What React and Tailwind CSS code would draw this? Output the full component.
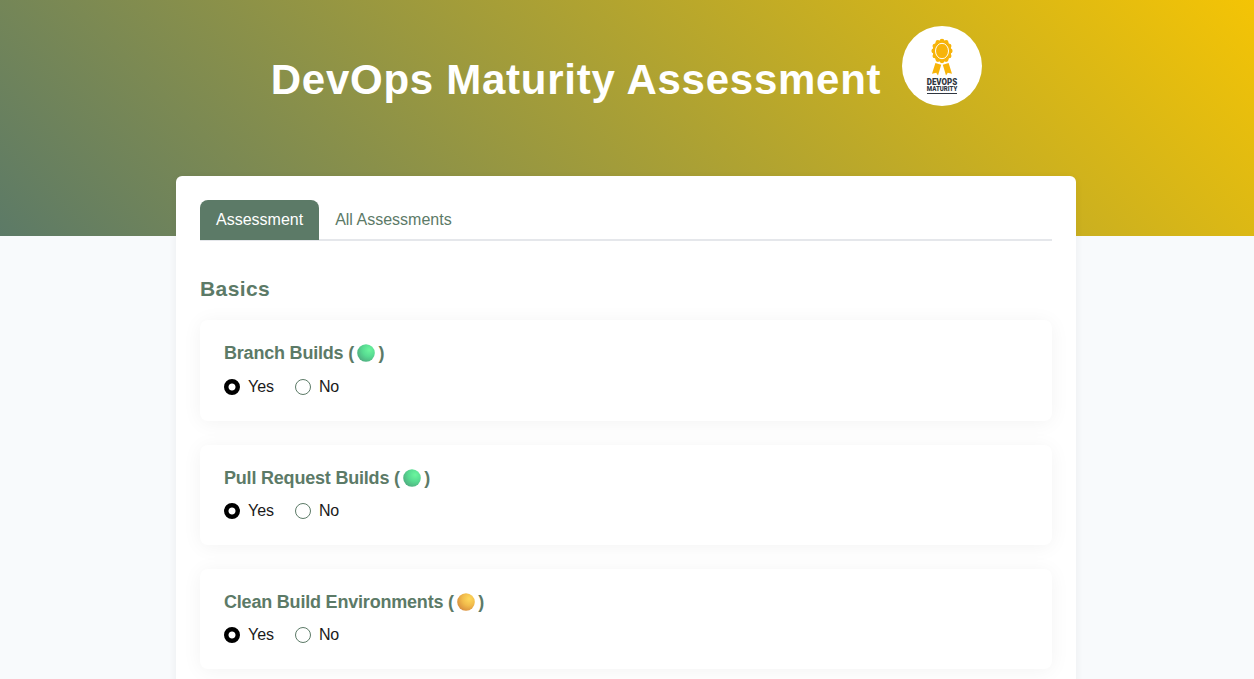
import React from 'react';

const questions = [
  { title: 'Branch Builds', tone: 'green' },
  { title: 'Pull Request Builds', tone: 'green' },
  { title: 'Clean Build Environments', tone: 'yellow' },
];

const tones = {
  green: ['#6cf59e', '#58dc92', '#4fae80'],
  yellow: ['#ffd95c', '#f2bd4c', '#d98f3e'],
};

function Orb({ tone, id }) {
  const [light, mid, dark] = tones[tone];
  return (
    <svg className="mx-[3px] -mt-px size-[18px] shrink-0" viewBox="0 0 18 18">
      <defs>
        <radialGradient id={id} cx="0.68" cy="0.32" r="0.75">
          <stop offset="0" stopColor={light} />
          <stop offset="0.5" stopColor={mid} />
          <stop offset="1" stopColor={dark} />
        </radialGradient>
      </defs>
      <circle cx="9" cy="9" r="8.8" fill={`url(#${id})`} />
    </svg>
  );
}

const petals = Array.from({ length: 12 }, (_, i) => {
  const a = (i * Math.PI) / 6;
  return [40 + 8.2 * Math.sin(a), 25 - 9.8 * Math.cos(a)];
});

function Logo() {
  return (
    <svg className="size-20 shrink-0" viewBox="0 0 80 80">
      <circle cx="40" cy="40" r="40" fill="#fff" />
      <path d="M33.4 37 L39.2 38.8 L36 49.5 L34.2 46.8 L30 47.8 Z M46.6 37 L40.8 38.8 L44 49.5 L45.8 46.8 L50 47.8 Z" fill="#f7b40a" />
      <g fill="#f7b40a">
        <ellipse cx="40" cy="25" rx="9.4" ry="10.8" />
        {petals.map(([x, y], i) => (
          <circle key={i} cx={x} cy={y} r="2.4" />
        ))}
      </g>
      <ellipse cx="40" cy="25" rx="6.5" ry="7.7" fill="none" stroke="#fff" strokeWidth="1" />
      <g fill="#2f3640" fontFamily="Roboto, 'Liberation Sans', sans-serif" fontWeight="900" textAnchor="middle">
        <text x="40" y="58.8" fontSize="9" textLength="30.5" lengthAdjust="spacingAndGlyphs">DEVOPS</text>
        <text x="40" y="65" fontSize="6.6" textLength="30.5" lengthAdjust="spacingAndGlyphs">MATURITY</text>
      </g>
      <rect x="25" y="67" width="30" height="1" fill="#2f3640" />
    </svg>
  );
}

const radioClass =
  'size-4 appearance-none rounded-full border border-[#5c7a67] checked:border-4 checked:border-black checked:bg-[radial-gradient(circle,#fff_3px,#000_4px)]';

function Question({ title, tone, index }) {
  return (
    <section className="h-[100.3px] rounded-lg bg-white px-6 pt-[20.6px] shadow-[0_2px_20px_rgba(0,0,0,0.05)]">
      <h3 className="flex h-[26px] items-center text-[18px] font-bold tracking-[-0.2px] text-[#5c7a67]">
        <span>{title} (</span>
        <Orb tone={tone} id={`orb-${index}`} />
        <span className="ml-[0.5px]">)</span>
      </h3>
      <div className="mt-[7.7px] flex h-6 items-center text-base text-[#1a1a1a]">
        <label className="flex items-center gap-2">
          <input type="radio" name={`q${index}`} defaultChecked className={radioClass} />
          Yes
        </label>
        <label className="ml-[21px] flex items-center gap-2 tracking-[-0.3px]">
          <input type="radio" name={`q${index}`} className={radioClass} />
          No
        </label>
      </div>
    </section>
  );
}

export default function App() {
  return (
    <div className="h-screen overflow-hidden bg-[#f8fafc] font-['Liberation_Sans',Arial,sans-serif]">
      <header className="flex h-[236px] items-start justify-center gap-[20.5px] bg-[linear-gradient(45deg,#5c7a67,#f4c405)] pt-[26px] pr-[1.5px]">
        <h1 className="mt-6 text-[42px] leading-[60px] font-bold tracking-[0.74px] whitespace-nowrap text-white">DevOps Maturity Assessment</h1>
        <Logo />
      </header>
      <main className="relative mx-auto -mt-[60px] h-[800px] w-[900px] -left-px rounded-md bg-white px-6 pt-6 shadow-[0_2px_8px_rgba(0,0,0,0.06)]">
        <nav className="flex h-[41px] border-b-2 border-[#e5e7eb] text-base">
          <button className="h-10 rounded-t-lg bg-[#5c7a67] px-4 text-white">Assessment</button>
          <button className="h-10 px-4 text-[#5c7a67]">All Assessments</button>
        </nav>
        <h2 className="mt-8 text-[21px] leading-8 font-bold tracking-[0.4px] text-[#5c7a67]">Basics</h2>
        <div className="mt-[15.4px] flex flex-col gap-6">
          {questions.map((q, i) => (
            <Question key={q.title} index={i} {...q} />
          ))}
          <section className="h-[100.3px] rounded-lg bg-white shadow-[0_2px_20px_rgba(0,0,0,0.05)]" />
        </div>
      </main>
    </div>
  );
}
